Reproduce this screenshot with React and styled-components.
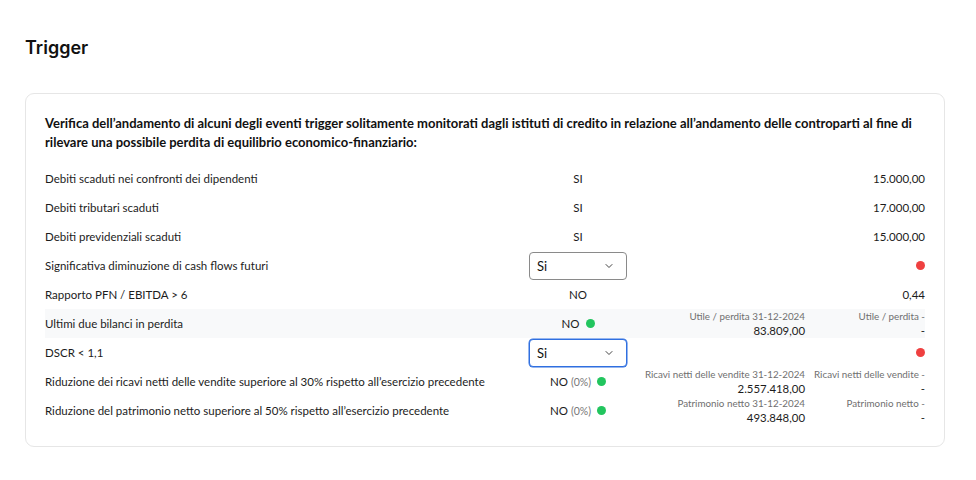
import React from "react";
import styled, { createGlobalStyle } from "styled-components";

const Global = createGlobalStyle`
  html, body { margin: 0; padding: 0; background: #ffffff; }
  body { font-family: Lato, "Noto Sans", sans-serif; color: #1c1c1c; }
  * { box-sizing: border-box; }
`;

const Page = styled.div`
  width: 976px;
  padding: 37px 31px 30px 25px;
`;

const Title = styled.h1`
  margin: 0 0 34px 0;
  font-family: Inter, "Noto Sans", sans-serif;
  font-size: 18px;
  font-weight: 600;
  line-height: 22px;
  color: #111;
`;

const Card = styled.div`
  border: 1px solid #e6e6e6;
  border-radius: 9px;
  padding: 20px 19px 21px 19px;
`;

const Intro = styled.p`
  margin: 0 0 12px 0;
  font-size: 13px;
  font-weight: 700;
  line-height: 19px;
  color: #111;
`;

const Row = styled.div`
  display: grid;
  grid-template-columns: 484px 98px 178px 120px;
  align-items: center;
  height: 29px;
  background: ${(p) => (p.$shaded ? "#f8f9fa" : "transparent")};
  font-size: 11.5px;
`;

const Label = styled.div`
  color: #1c1c1c;
`;

const Status = styled.div`
  display: flex;
  justify-content: center;
  align-items: center;
  gap: 6px;
  white-space: nowrap;
`;

const Pct = styled.span`
  color: #777;
  font-size: 10.5px;
  margin-left: 3px;
`;

const Dot = styled.span`
  width: 9px;
  height: 9px;
  border-radius: 50%;
  background: ${(p) => (p.$red ? "#ef4040" : "#22c55e")};
  display: inline-block;
`;

const Select = styled.div`
  height: 28px;
  border: 1px solid ${(p) => (p.$focus ? "#2f6fe0" : "#8a8a8a")};
  border-radius: 4px;
  display: flex;
  align-items: center;
  justify-content: space-between;
  padding: 0 11px 0 7px;
  font-size: 13px;
  color: #111;
  background: #fff;
  box-shadow: ${(p) => (p.$focus ? "0 0 0 0.5px #2f6fe0" : "none")};
`;

const Cell = styled.div`
  display: flex;
  flex-direction: column;
  align-items: flex-end;
  justify-content: center;
  text-align: right;
  white-space: nowrap;
`;

const Small = styled.span`
  font-size: 9.8px;
  color: #6f6f6f;
  line-height: 13px;
`;

const Value = styled.span`
  font-size: 11.4px;
  color: #1c1c1c;
  line-height: 15px;
`;

const Plain = styled.span`
  font-size: 11.5px;
`;

const Chevron = () => (
  <svg width="12" height="12" viewBox="0 0 24 24" fill="none" stroke="#444" strokeWidth="2" strokeLinecap="round" strokeLinejoin="round">
    <path d="M6 9l6 6 6-6" />
  </svg>
);

const rows = [
  { label: "Debiti scaduti nei confronti dei dipendenti", status: "SI", right: <Plain>15.000,00</Plain> },
  { label: "Debiti tributari scaduti", status: "SI", right: <Plain>17.000,00</Plain> },
  { label: "Debiti previdenziali scaduti", status: "SI", right: <Plain>15.000,00</Plain> },
  { label: "Significativa diminuzione di cash flows futuri", select: true, right: <Dot $red /> },
  { label: "Rapporto PFN / EBITDA > 6", status: "NO", right: <Plain>0,44</Plain> },
  {
    label: "Ultimi due bilanci in perdita",
    status: "NO",
    dot: true,
    shaded: true,
    mid: ["Utile / perdita 31-12-2024", "83.809,00"],
    end: ["Utile / perdita -", "-"],
  },
  { label: "DSCR < 1,1", select: true, focus: true, right: <Dot $red /> },
  {
    label: "Riduzione dei ricavi netti delle vendite superiore al 30% rispetto all’esercizio precedente",
    status: "NO",
    pct: true,
    dot: true,
    mid: ["Ricavi netti delle vendite 31-12-2024", "2.557.418,00"],
    end: ["Ricavi netti delle vendite -", "-"],
  },
  {
    label: "Riduzione del patrimonio netto superiore al 50% rispetto all’esercizio precedente",
    status: "NO",
    pct: true,
    dot: true,
    mid: ["Patrimonio netto 31-12-2024", "493.848,00"],
    end: ["Patrimonio netto -", "-"],
  },
];

export default function App() {
  return (
    <>
      <Global />
      <Page>
        <Title>Trigger</Title>
        <Card>
          <Intro>
            Verifica dell’andamento di alcuni degli eventi trigger solitamente monitorati dagli istituti di credito in
            relazione all’andamento delle controparti al fine di rilevare una possibile perdita di equilibrio
            economico-finanziario:
          </Intro>
          {rows.map((r, i) => (
            <Row key={i} $shaded={r.shaded}>
              <Label>{r.label}</Label>
              {r.select ? (
                <Select $focus={r.focus}>
                  <span>Si</span>
                  <Chevron />
                </Select>
              ) : (
                <Status>
                  <span>
                    {r.status}
                    {r.pct && <Pct>(0%)</Pct>}
                  </span>
                  {r.dot && <Dot />}
                </Status>
              )}
              <Cell>
                {r.mid && (
                  <>
                    <Small>{r.mid[0]}</Small>
                    <Value>{r.mid[1]}</Value>
                  </>
                )}
              </Cell>
              <Cell>
                {r.end ? (
                  <>
                    <Small>{r.end[0]}</Small>
                    <Value>{r.end[1]}</Value>
                  </>
                ) : (
                  r.right
                )}
              </Cell>
            </Row>
          ))}
        </Card>
      </Page>
    </>
  );
}
